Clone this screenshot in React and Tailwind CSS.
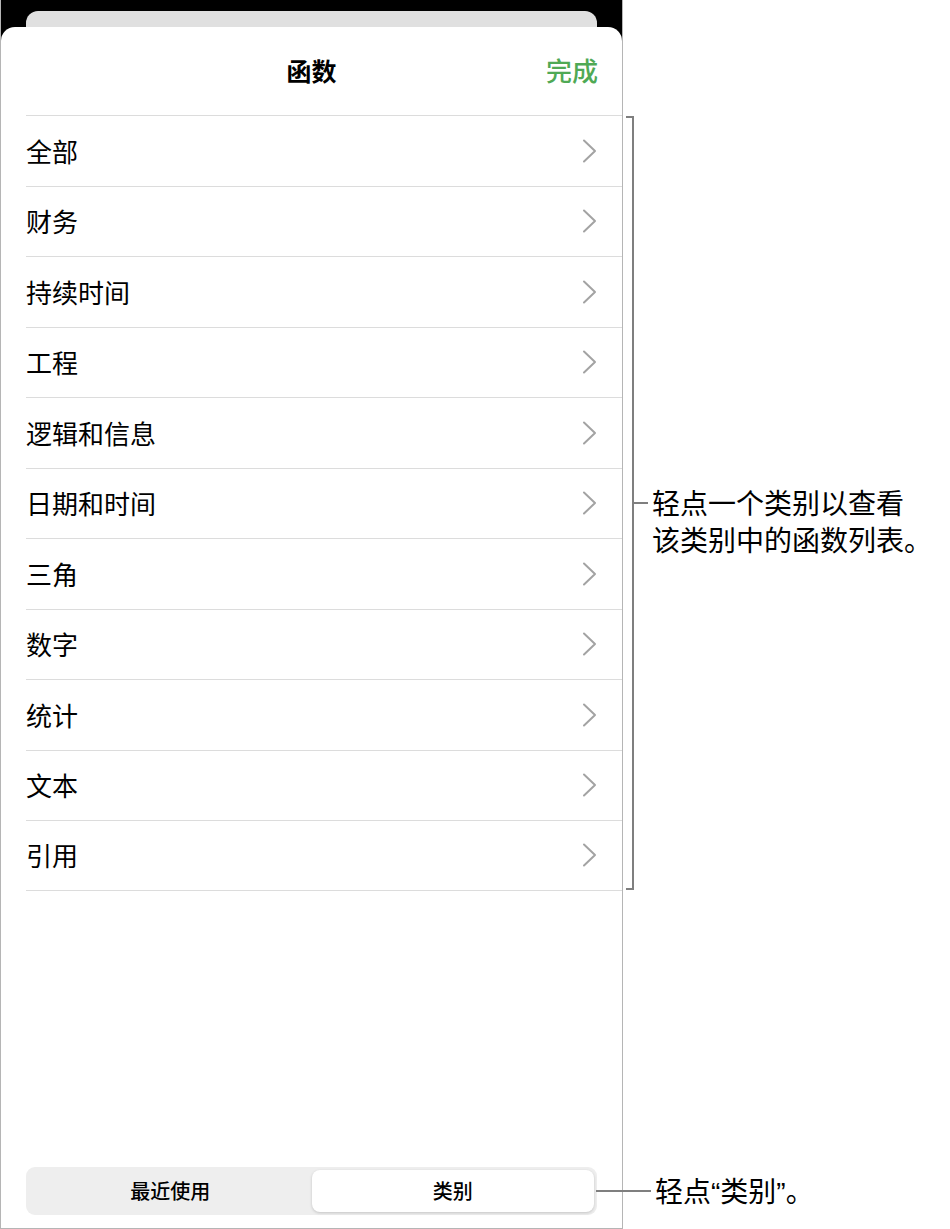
import React from "react";

const cats = ["全部", "财务", "持续时间", "工程", "逻辑和信息", "日期和时间", "三角", "数字", "统计", "文本", "引用"];

function Chevron() {
  return (
    <svg width="15" height="24" viewBox="0 0 15 24" fill="none">
      <polyline points="2,1.5 13,12 2,22.5" stroke="#a3a3a3" strokeWidth="2" strokeLinecap="round" strokeLinejoin="round" />
    </svg>
  );
}

export default function App() {
  const font = { fontFamily: '"Noto Sans CJK SC", "Noto Sans", sans-serif' };
  return (
    <div className="w-[950px] h-[1229px] bg-white flex text-black" style={font}>
      {/* device */}
      <div className="w-[623px] h-[1229px] bg-black flex flex-col border-l border-r border-b border-[#b5b5b5] relative">
        <div className="h-[27px] pt-[11px] px-[25px] shrink-0">
          <div className="h-full bg-[#e0e0e0] rounded-t-[12px]" />
        </div>
        <div className="flex-1 bg-white rounded-t-[14px] flex flex-col">
          <div className="h-[88px] relative flex items-center justify-center shrink-0">
            <span className="text-[25px] font-bold leading-none mt-[-2px]">函数</span>
            <span className="absolute right-[24px] top-[30px] text-[26px] font-medium text-[#4fa955] leading-none">完成</span>
          </div>
          <div className="ml-[25px]">
            {cats.map((c, i) => (
              <div
                key={c}
                className={`h-[70.5px] flex items-center justify-between pr-[25px] border-t border-[#dcdcdc] ${i === cats.length - 1 ? "border-b" : ""}`}
              >
                <span className="text-[26px] leading-none">{c}</span>
                <Chevron />
              </div>
            ))}
          </div>
          <div className="flex-1" />
          <div className="mx-[25px] mb-[13px] h-[48px] bg-[#eeeeee] rounded-[9px] flex p-[3px]">
            <div className="flex-1 flex items-center justify-center text-[20px] font-medium">最近使用</div>
            <div className="flex-1 flex items-center justify-center text-[20px] font-medium bg-white rounded-[8px] shadow-[0_1px_3px_rgba(0,0,0,0.18)]">类别</div>
          </div>
        </div>
      </div>

      {/* annotations */}
      <div className="flex-1 flex flex-col">
        <div className="h-[116px]" />
        <div className="flex h-[774px] ml-[3px]">
          <div className="w-[8px] h-full border-t-2 border-b-2 border-r-2 border-[#7f7f7f]" />
          <div className="flex items-start pt-[368px]">
            <div className="w-[14px] h-[2px] bg-[#7f7f7f] mt-[18px]" />
            <div className="ml-[4px] text-[28px] leading-[37px]">
              轻点一个类别以查看
              <br />
              该类别中的函数列表。
            </div>
          </div>
        </div>
        <div className="flex-1" />
        <div className="h-[48px] mb-[14px] flex items-center ml-[-27px] relative z-10">
          <div className="w-[55px] h-[2px] bg-[#7f7f7f]" />
          <span className="ml-[4px] text-[28px] leading-none">
            轻点<span style={{ fontFamily: '"Liberation Sans", sans-serif' }}>“</span>类别<span style={{ fontFamily: '"Liberation Sans", sans-serif' }}>”</span>。
          </span>
        </div>
      </div>
    </div>
  );
}
